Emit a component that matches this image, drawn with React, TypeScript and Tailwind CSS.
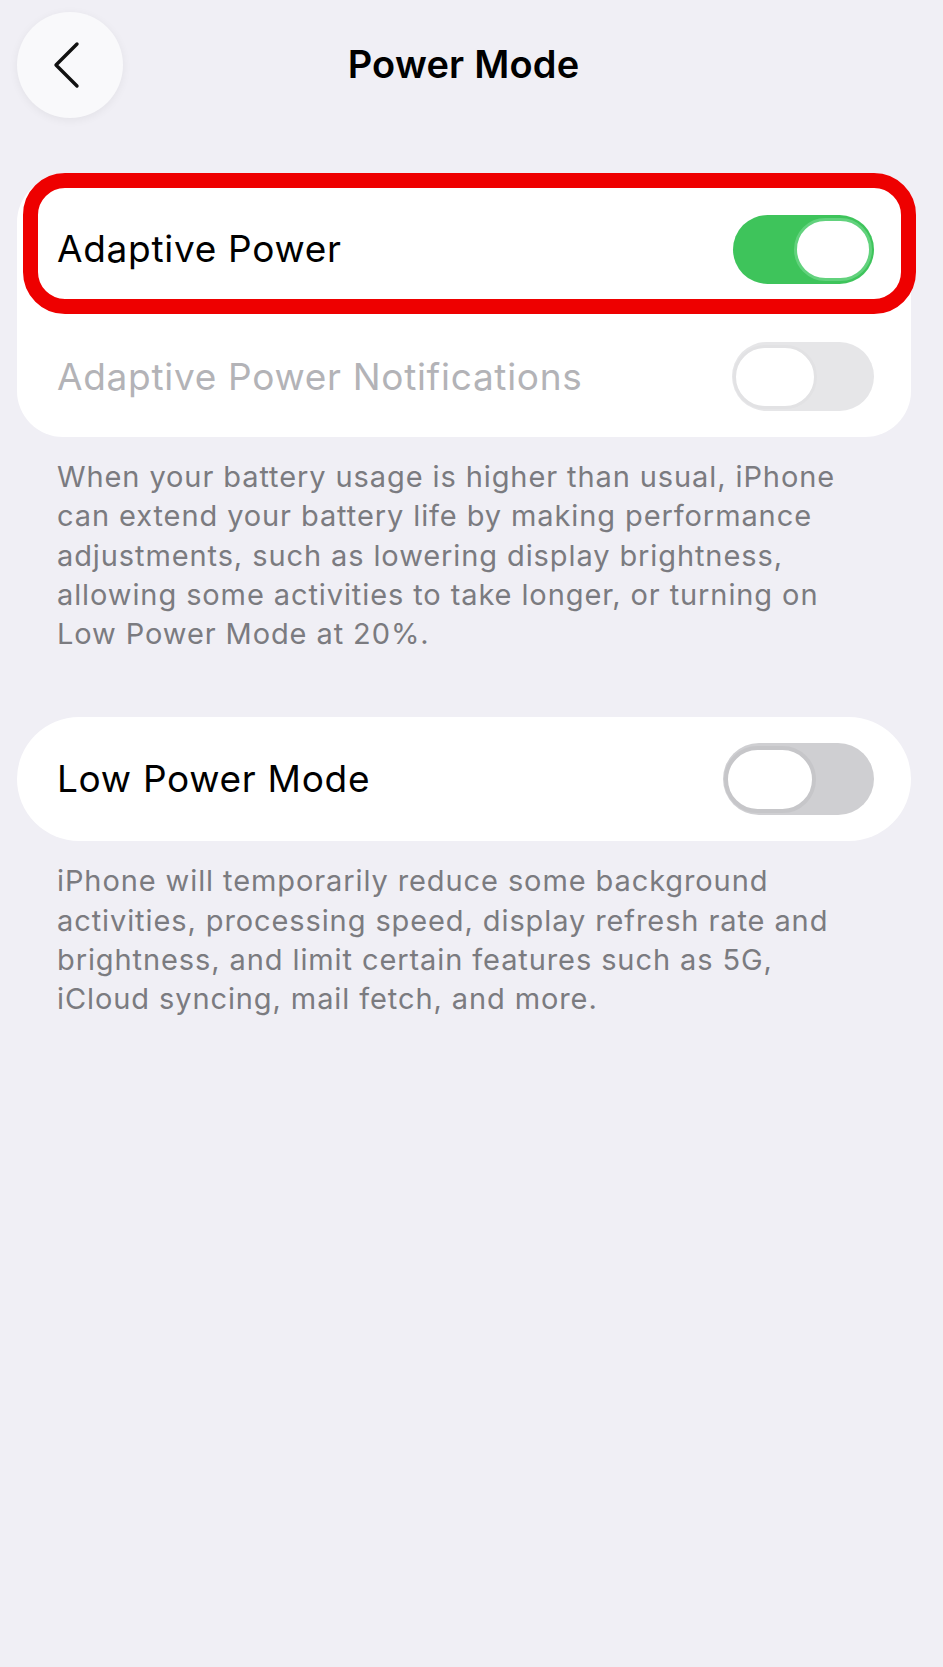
const font = "font-['Inter','Liberation_Sans',sans-serif]";

function Toggle({ on, disabled, wide }: { on?: boolean; disabled?: boolean; wide?: boolean }) {
  if (on) {
    return (
      <div className="flex h-[69px] w-[141px] items-center justify-end rounded-full bg-[#3ec45b] pr-[2px]">
        <div className="h-[63px] w-[78px] rounded-full border-[3px] border-[#62d27d] bg-white" />
      </div>
    );
  }
  return (
    <div
      className={
        disabled
          ? "flex h-[69px] w-[142px] items-center rounded-full bg-[#e6e6e8] pl-[1px]"
          : "flex h-[72px] w-[151px] items-center rounded-full bg-[#cfcfd2] pl-[1px]"
      }
    >
      <div
        className={
          disabled
            ? "h-[64px] w-[84px] rounded-full border-[3px] border-[#e2e2e4] bg-white"
            : wide
              ? "h-[67px] w-[92px] rounded-full border-[4px] border-[#c6c6c9] bg-white"
              : "h-[67px] w-[84px] rounded-full border-[4px] border-[#c6c6c9] bg-white"
        }
      />
    </div>
  );
}

export default function App() {
  return (
    <div className={`min-h-[1667px] w-[943px] bg-[#f0eff5] ${font}`}>
      <header className="relative flex h-[128px] items-start pl-[17px] pt-[12px]">
        <button className="flex h-[106px] w-[106px] items-center justify-center rounded-full bg-[#f9f9fb] shadow-[0_2px_10px_rgba(0,0,0,0.06)]">
          <svg width="30" height="48" viewBox="0 0 30 48" fill="none" className="-ml-[8px]">
            <path d="M26 3 L5 24 L26 45" stroke="#111" strokeWidth="3.4" strokeLinecap="round" strokeLinejoin="round" />
          </svg>
        </button>
        <h1 className="absolute left-0 right-0 top-[40px] pr-[16px] text-center text-[38px] font-semibold leading-[48px] tracking-[0.2px] text-black">
          Power Mode
        </h1>
      </header>

      <div className="relative ml-[17px] mr-[32px] mt-[48px] rounded-[46px] bg-white">
        <div className="flex h-[146px] items-center justify-between pl-[40px] pr-[37px]">
          <span className="text-[37px] leading-[44px] tracking-[0.7px] text-black">Adaptive Power</span>
          <Toggle on />
        </div>
        <div className="flex h-[115px] items-center justify-between pb-[6px] pl-[40px] pr-[37px]">
          <span className="text-[37px] leading-[44px] tracking-[0.7px] text-[#b3b3b7]">Adaptive Power Notifications</span>
          <Toggle disabled />
        </div>
        <div className="pointer-events-none absolute left-[6px] right-[-5px] top-[-3px] h-[141px] rounded-[42px] border-[15px] border-[#ee0000]" />
      </div>

      <p className="mt-[20px] pl-[57px] pr-[20px] text-[29px] leading-[39.3px] tracking-[0.9px] text-[#7b7b80]">
        When your battery usage is higher than usual, iPhone
        <br />
        can extend your battery life by making performance
        <br />
        adjustments, such as lowering display brightness,
        <br />
        allowing some activities to take longer, or turning on
        <br />
        Low Power Mode at 20%.
      </p>

      <div className="ml-[17px] mr-[32px] mt-[64px] flex h-[124px] items-center justify-between rounded-[62px] bg-white pl-[40px] pr-[37px]">
        <span className="text-[37px] leading-[44px] tracking-[0.7px] text-black">Low Power Mode</span>
        <Toggle wide />
      </div>

      <p className="mt-[20px] pl-[57px] pr-[20px] text-[29px] leading-[39.3px] tracking-[0.9px] text-[#7b7b80]">
        iPhone will temporarily reduce some background
        <br />
        activities, processing speed, display refresh rate and
        <br />
        brightness, and limit certain features such as 5G,
        <br />
        iCloud syncing, mail fetch, and more.
      </p>
    </div>
  );
}
